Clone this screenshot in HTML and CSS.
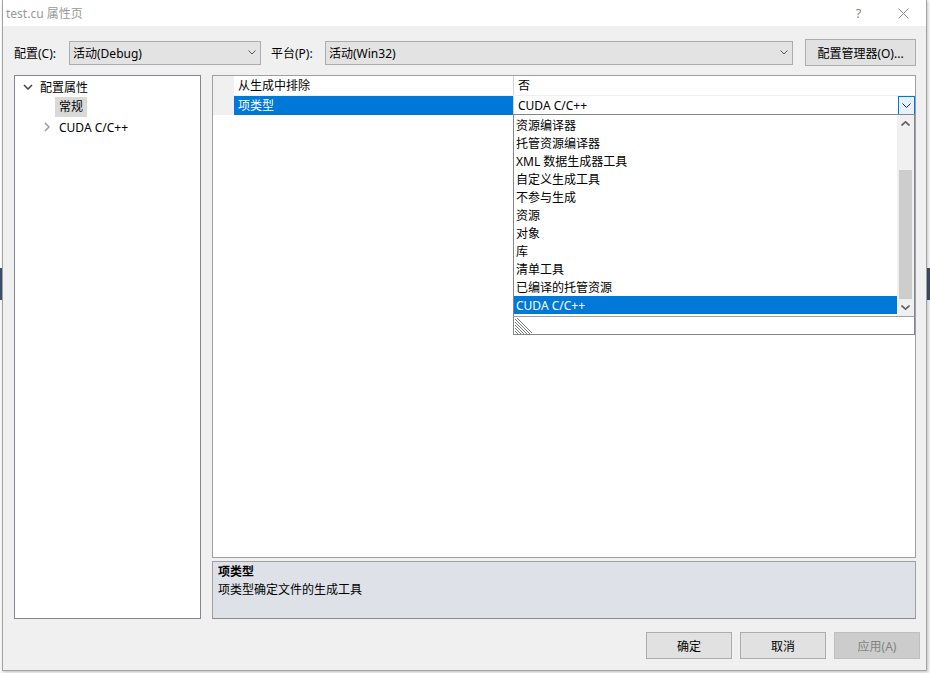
FILE: index.html
```html
<!DOCTYPE html>
<html>
<head>
	<meta charset="utf-8">
	<title>test.cu 属性页</title>
	<link rel="stylesheet" href="styles.css">
</head>
<body>
<div class="dialog">
	<!-- title bar -->
	<div class="titlebar">
		<span class="title">test.cu 属性页</span>
		<span class="tb-btn help">?</span>
		<span class="tb-btn close">
			<svg width="11" height="11" viewBox="0 0 11 11"><path d="M0.5 0.5 L10.5 10.5 M10.5 0.5 L0.5 10.5" stroke="#8a8a8a" stroke-width="1" fill="none"/></svg>
		</span>
	</div>

	<!-- configuration / platform -->
	<div class="toolbar">
		<span class="lbl lbl-conf">配置(C):</span>
		<div class="combo combo-conf">
			<span>活动(Debug)</span>
			<svg class="chev" width="8" height="5" viewBox="0 0 8 5"><path d="M0.5 0.5 L4 4 L7.5 0.5" stroke="#555" fill="none"/></svg>
		</div>
		<span class="lbl lbl-plat">平台(P):</span>
		<div class="combo combo-plat">
			<span>活动(Win32)</span>
			<svg class="chev" width="8" height="5" viewBox="0 0 8 5"><path d="M0.5 0.5 L4 4 L7.5 0.5" stroke="#555" fill="none"/></svg>
		</div>
		<button class="btn btn-mgr">配置管理器(O)...</button>
	</div>

	<div class="main">
		<!-- left tree -->
		<div class="tree">
			<div class="node node-root">
				<svg class="tchev" width="10" height="6" viewBox="0 0 10 6"><path d="M1 1 L5 5 L9 1" stroke="#444" stroke-width="1.5" fill="none"/></svg>
				<span>配置属性</span>
			</div>
			<div class="node node-sel"><span class="sel">常规</span></div>
			<div class="node node-cuda">
				<svg class="tchev" width="6" height="10" viewBox="0 0 6 10"><path d="M1 1 L5 5 L1 9" stroke="#9a9a9a" stroke-width="1.5" fill="none"/></svg>
				<span>CUDA C/C++</span>
			</div>
		</div>

		<!-- right side -->
		<div class="right">
			<div class="grid">
				<div class="row">
					<div class="gutter"></div>
					<div class="name">从生成中排除</div>
					<div class="value">否</div>
				</div>
				<div class="row row-active">
					<div class="gutter"></div>
					<div class="name">项类型</div>
					<div class="value">
						<span>CUDA C/C++</span>
						<span class="dd-btn">
							<svg width="9" height="5" viewBox="0 0 9 5"><path d="M0.5 0.5 L4.5 4.5 L8.5 0.5" stroke="#222" fill="none"/></svg>
						</span>
					</div>
				</div>

				<!-- open drop-down list -->
				<div class="droplist">
					<div class="dl-body">
						<ul class="items">
							<li>资源编译器</li>
							<li>托管资源编译器</li>
							<li>XML 数据生成器工具</li>
							<li>自定义生成工具</li>
							<li>不参与生成</li>
							<li>资源</li>
							<li>对象</li>
							<li>库</li>
							<li>清单工具</li>
							<li>已编译的托管资源</li>
							<li class="picked">CUDA C/C++</li>
						</ul>
						<div class="vscroll">
							<div class="sb-arrow">
								<svg width="9" height="5" viewBox="0 0 9 5"><path d="M0.5 4.5 L4.5 0.8 L8.5 4.5" stroke="#606060" stroke-width="1.6" fill="none"/></svg>
							</div>
							<div class="sb-track"><div class="sb-thumb"></div></div>
							<div class="sb-arrow">
								<svg width="9" height="5" viewBox="0 0 9 5"><path d="M0.5 0.5 L4.5 4.2 L8.5 0.5" stroke="#606060" stroke-width="1.6" fill="none"/></svg>
							</div>
						</div>
					</div>
					<div class="grip">
						<svg width="17" height="16" viewBox="0 0 17 16">
							<path d="M0 1 L15 16 M0 4 L12 16 M0 7 L9 16 M0 10 L6 16 M0 13 L3 16 M2 0 L17 15" stroke="#7a7a7a" stroke-width="1" fill="none"/>
						</svg>
					</div>
				</div>
			</div>

			<div class="desc">
				<div class="desc-title">项类型</div>
				<div>项类型确定文件的生成工具</div>
			</div>
		</div>
	</div>

	<div class="buttons">
		<button class="btn">确定</button>
		<button class="btn">取消</button>
		<button class="btn btn-off">应用(A)</button>
	</div>
</div>
</body>
</html>
```

FILE: styles.css
```css
* {
	box-sizing: border-box;
}
body {
	margin: 0;
	width: 930px;
	height: 673px;
	overflow: hidden;
	font-family: "Noto Sans", "Noto Sans CJK SC", sans-serif;
	font-size: 12px;
	color: #000;
	background: linear-gradient(to bottom, #fff 0, #fff 268px, #3f4f69 268px, #3f4f69 300px, #fafafa 300px);
}
.dialog {
	margin-left: 2px;
	width: 925px;
	height: 671px;
	background-color: #f0f0f0;
	border: 1px solid #a3a3a3;
	border-top: none;
	box-shadow: 1px 1px 3px rgba(0, 0, 0, 0.25);
	display: flex;
	flex-direction: column;
}

/* title bar */
.titlebar {
	height: 26px;
	background-color: #fff;
	display: flex;
	align-items: center;
	padding-left: 3px;
	color: #999;
}
.title {
	flex: 1;
}
.tb-btn {
	width: 45px;
	height: 26px;
	display: flex;
	align-items: center;
	justify-content: center;
}
.help {
	font-size: 13px;
	color: #8a8a8a;
}

/* toolbar */
.toolbar {
	display: flex;
	align-items: center;
	height: 27px;
	margin-top: 13px;
	padding: 0 10px 0 11px;
}
.lbl-conf {
	width: 55px;
}
.lbl-plat {
	width: 54px;
	margin-left: 10px;
}
.combo {
	height: 24px;
	background-color: #e3e3e3;
	border: 1px solid #acacac;
	display: flex;
	align-items: center;
	justify-content: space-between;
	padding: 0 4px 0 3px;
}
.combo-conf {
	width: 192px;
}
.combo-plat {
	width: 468px;
}
.btn {
	font-family: "Noto Sans", "Noto Sans CJK SC", sans-serif;
	font-size: 12px;
	color: #000;
	background-color: #e1e1e1;
	border: 1px solid #adadad;
	margin: 0;
	padding: 0;
	height: 27px;
}
.btn-mgr {
	width: 111px;
	margin-left: 12px;
}

/* main area */
.main {
	display: flex;
	gap: 11px;
	height: 544px;
	margin-top: 9px;
	padding: 0 10px 0 11px;
}
.tree {
	width: 187px;
	background-color: #fff;
	border: 1px solid #828790;
	padding-top: 1px;
}
.node {
	height: 20px;
	display: flex;
	align-items: center;
}
.node-root {
	padding-left: 8px;
}
.node-root .tchev {
	margin-right: 7px;
}
.node-sel {
	padding-left: 40px;
}
.sel {
	background-color: #d9d9d9;
	padding: 1px 4px;
	line-height: 18px;
}
.node-cuda {
	padding-left: 29px;
}
.node-cuda .tchev {
	margin-right: 9px;
}

.right {
	width: 704px;
	display: flex;
	flex-direction: column;
	gap: 3px;
}
.grid {
	position: relative;
	height: 483px;
	background-color: #fff;
	border: 1px solid #a0a0a0;
}
.row {
	display: flex;
	height: 20px;
	border-bottom: 1px solid #f0f0f0;
}
.row-active {
	height: 19px;
	border-bottom: none;
}
.gutter {
	width: 21px;
	background-color: #f0f0f0;
}
.name {
	width: 280px;
	padding-left: 4px;
	border-right: 1px solid #d4d4d4;
	line-height: 20px;
}
.row-active .name {
	background-color: #0078d7;
	color: #fff;
}
.value {
	flex: 1;
	padding-left: 4px;
	line-height: 20px;
	display: flex;
	justify-content: space-between;
}
.dd-btn {
	width: 17px;
	height: 19px;
	border: 1px solid #0078d7;
	background-color: #e5f1fb;
	display: flex;
	align-items: center;
	justify-content: center;
}

/* open list */
.droplist {
	position: absolute;
	left: 300px;
	top: 38px;
	width: 402px;
	height: 221px;
	background-color: #fff;
	border: 1px solid #828790;
	display: flex;
	flex-direction: column;
}
.dl-body {
	display: flex;
	height: 201px;
}
.items {
	list-style: none;
	margin: 0;
	padding: 1px 0 0;
	flex: 1;
}
.items li {
	height: 18px;
	line-height: 19px;
	padding-left: 2px;
}
.items li.picked {
	background-color: #0078d7;
	color: #fff;
}
.vscroll {
	width: 17px;
	background-color: #f0f0f0;
	display: flex;
	flex-direction: column;
}
.sb-arrow {
	height: 17px;
	display: flex;
	align-items: center;
	justify-content: center;
}
.sb-track {
	flex: 1;
	display: flex;
	flex-direction: column;
	justify-content: flex-end;
	padding: 0 2px;
}
.sb-thumb {
	height: 129px;
	background-color: #cdcdcd;
}
.grip {
	flex: 1;
	border-top: 1px solid #a0a0a0;
	padding: 1px 0 0 1px;
	display: flex;
	align-items: flex-end;
}

.desc {
	height: 58px;
	background-color: #dee1e8;
	border: 1px solid #a0a0a0;
	border-bottom-color: #8c8c8c;
	padding: 1px 5px;
	line-height: 18px;
}
.desc-title {
	font-weight: bold;
}

/* bottom buttons */
.buttons {
	display: flex;
	justify-content: flex-end;
	gap: 8px;
	margin-top: 13px;
	padding-right: 6px;
}
.buttons .btn {
	width: 86px;
}
.btn-off {
	background-color: #cccccc;
	border-color: #bfbfbf;
	color: #838383;
}
```
